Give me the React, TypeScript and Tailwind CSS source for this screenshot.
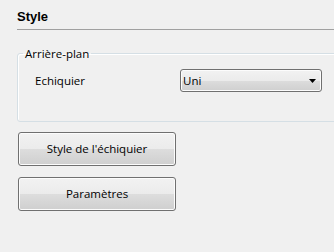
const ui = { fontFamily: '"Open Sans", "Noto Sans", sans-serif' };

function Win7Button({ label }: { label: string }) {
    return (
        <button
            type="button"
            className="ml-[1px] flex h-[34px] w-[158px] items-center justify-center rounded-[3px] border border-[#707070] bg-[linear-gradient(to_bottom,#f2f2f2_0%,#ebebeb_50%,#dddddd_50%,#cfcfcf_100%)] text-[11.5px] text-black shadow-[inset_0_0_0_1px_#fcfcfc]"
        >
            {label}
        </button>
    );
}

function ComboBox({ value }: { value: string }) {
    return (
        <div className="flex h-[23px] w-[142px] items-center justify-between rounded-[3px] border border-[#707070] bg-[linear-gradient(to_bottom,#f2f2f2_0%,#ebebeb_50%,#dddddd_50%,#cfcfcf_100%)] pl-[2px] pr-[4px] text-[11.5px] text-black shadow-[inset_0_0_0_1px_#fcfcfc]">
            <span>{value}</span>
            <svg width="7" height="4" viewBox="0 0 7 4" className="mr-[1px]">
                <path d="M0 0h7L3.5 4z" fill="#000" />
            </svg>
        </div>
    );
}

export default function App() {
    return (
        <div className="h-[252px] w-[334px] overflow-hidden bg-[#f0f0f0] pl-[17px]" style={ui}>
            <div className="mr-[-20px] pt-[9px]">
                <h2
                    className="text-[13px] font-bold leading-[16px] text-black"
                    style={{ fontFamily: '"Liberation Sans", Arial, sans-serif' }}
                >
                    Style
                </h2>
                <div className="mt-[4px] h-px bg-[#a0a0a0]" />
            </div>

            <fieldset className="mr-[-20px] mt-[16px] rounded-[3px] border border-[#d5dfe5] px-[5px] pb-[29px] shadow-[inset_1px_1px_0_#ffffff]">
                <legend className="px-[2px] text-[11.5px] leading-[15px] text-black">Arrière-plan</legend>
                <div className="mt-[8px] flex items-center pl-[12px]">
                    <span className="w-[145px] text-[11.5px] text-black">Echiquier</span>
                    <ComboBox value="Uni" />
                </div>
            </fieldset>

            <div className="mt-[10px] flex flex-col gap-[11px]">
                <Win7Button label="Style de l'échiquier" />
                <Win7Button label="Paramètres" />
            </div>
        </div>
    );
}
